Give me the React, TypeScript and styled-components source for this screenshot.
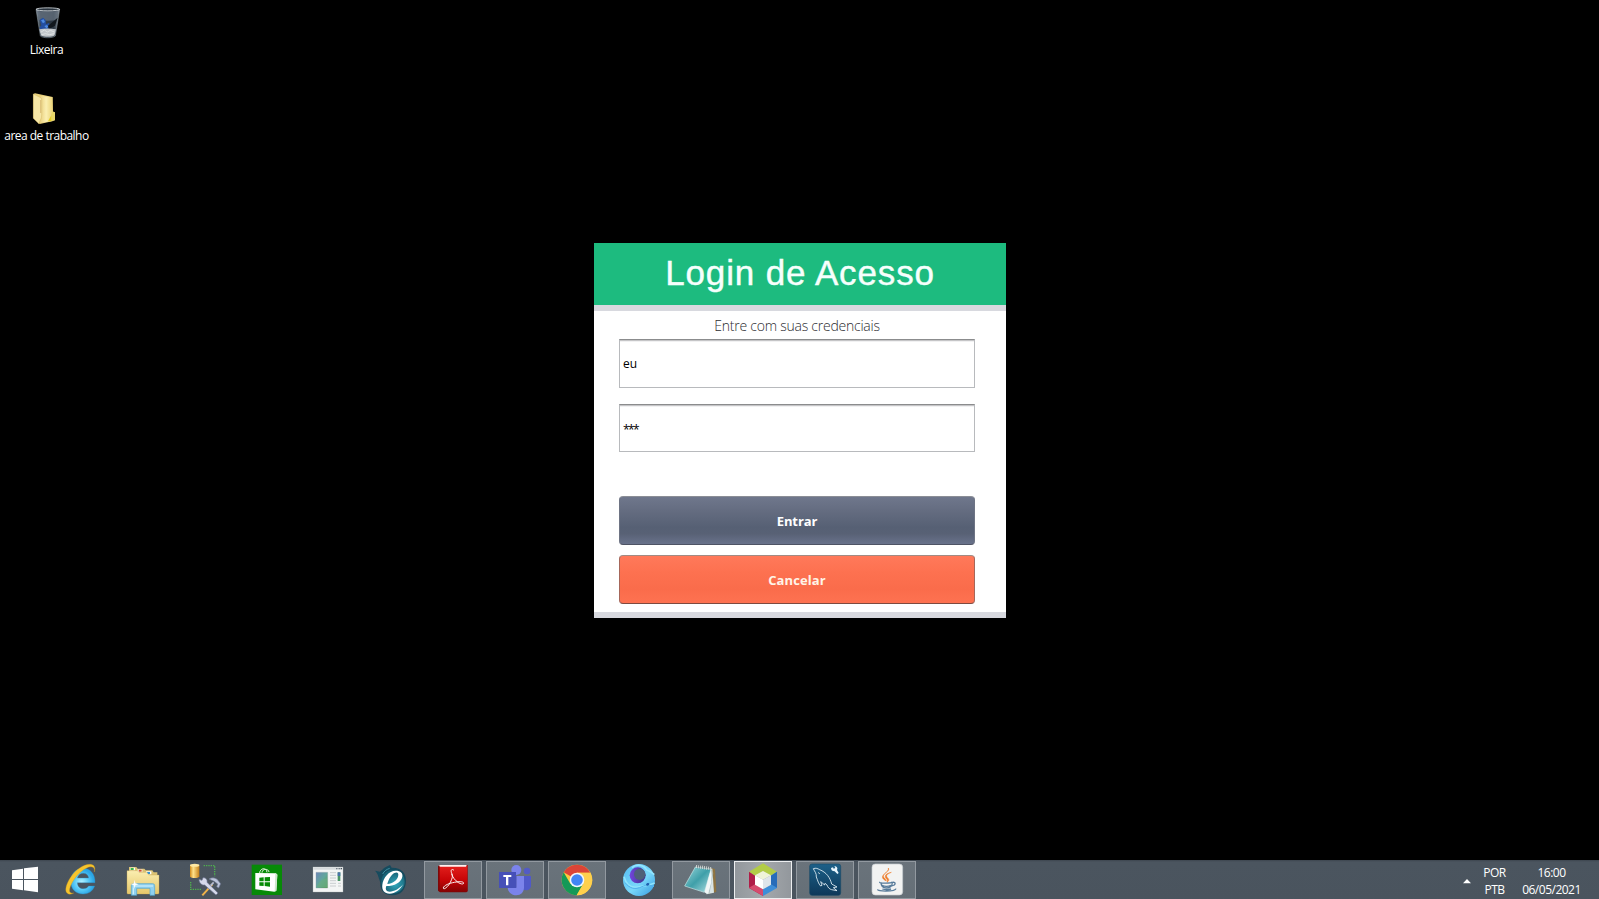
import React from "react";
import styled, { createGlobalStyle } from "styled-components";

const GlobalStyle = createGlobalStyle`
  html, body { margin: 0; background: #000; overflow: hidden; }
  * { box-sizing: border-box; }
`;

const Screen = styled.div`
  width: 1599px;
  height: 899px;
  display: flex;
  flex-direction: column;
  background: #000;
  font-family: "Open Sans", "Noto Sans", sans-serif;
`;

const Desktop = styled.main`
  flex: 1;
  display: flex;
  min-height: 0;
`;

const Shortcuts = styled.nav`
  width: 594px;
  display: flex;
  flex-direction: column;
  gap: 28px;
`;

const Shortcut = styled.div`
  width: 93px;
  height: 58px;
  display: flex;
  flex-direction: column;
  align-items: center;
`;

const ShortcutIcon = styled.svg`
  width: 93px;
  height: 42px;
  flex: none;
  display: block;
`;

const ShortcutLabel = styled.span<{ $spacing: number }>`
  color: #fff;
  font-size: 12px;
  line-height: 16px;
  white-space: nowrap;
  letter-spacing: ${(p) => p.$spacing}px;
`;

const Dialog = styled.section`
  width: 412px;
  height: 375px;
  margin-top: 243px;
  display: flex;
  flex-direction: column;
  background: #fff;
`;

const DialogHeader = styled.header`
  height: 62px;
  flex: none;
  display: flex;
  justify-content: center;
  background: #1dbb7f;
`;

const Title = styled.h1`
  margin: 0;
  font: 400 35px/59px "Liberation Sans", Arial, sans-serif;
  letter-spacing: 0.85px;
  color: #f6fffc;
  -webkit-text-stroke: 0.4px #f6fffc;
`;

const Stripe = styled.div`
  height: 6px;
  flex: none;
  background: #d8d9df;
`;

const Form = styled.div`
  flex: 1;
  min-height: 0;
  width: 381px;
  padding-left: 25px;
  display: flex;
  flex-direction: column;
`;

const Hint = styled.p`
  margin: 0;
  height: 28px;
  flex: none;
  padding-top: 5px;
  text-align: center;
  font-size: 14px;
  font-weight: 300;
  line-height: 20px;
  letter-spacing: -0.24px;
  color: #2c2c30;
`;

const Field = styled.div<{ $height: number; $gap: number }>`
  height: ${(p) => p.$height}px;
  flex: none;
  margin-bottom: ${(p) => p.$gap}px;
  padding: 0 3px 1px;
  display: flex;
  align-items: center;
  border: 1px solid #b8babd;
  border-top-color: #8b8c8d;
  box-shadow: inset 0 1px 0 #c5c5c7, inset 0 2px 0 #f1f1f2;
  font-size: 12px;
  color: #000;
`;

const Mask = styled.span`
  padding-top: 3px;
  letter-spacing: -1.6px;
`;

const Button = styled.button<{ $tone: "slate" | "coral" }>`
  width: 356px;
  height: 49px;
  flex: none;
  margin: 0 0 10px;
  padding: 1px 0 0;
  border: 1px solid;
  border-radius: 4px;
  font: 700 13px "Open Sans", "Noto Sans", sans-serif;
  letter-spacing: ${(p) => (p.$tone === "slate" ? -0.1 : 0.1)}px;
  color: ${(p) => (p.$tone === "slate" ? "#fff" : "#fff4e8")};
  border-color: ${(p) =>
    p.$tone === "slate" ? "#8b8e96 #6e7484 #4e5364" : "#a18b84 #a6675a #7e4a40"};
  background: ${(p) =>
    p.$tone === "slate"
      ? "linear-gradient(#6f778c 0%, #646c80 30%, #566074 65%, #586175 78%, #69728b 100%)"
      : "linear-gradient(#ff795a 0%, #fd7150 35%, #fa6c4b 70%, #fe7251 100%)"};

  &:last-child {
    margin-bottom: 0;
  }
`;

const Taskbar = styled.footer`
  height: 39px;
  flex: none;
  display: flex;
  background: linear-gradient(#3d464f 0, #4b555f 2px, #4a545e 100%);
`;

const StartButton = styled.div`
  width: 52px;
  height: 39px;
`;

const Apps = styled.div`
  display: flex;
  gap: 4px;
  flex: 1;
`;

type AppState = "pinned" | "open" | "active";

const AppButton = styled.div<{ $state: AppState }>`
  width: 58px;
  height: 39px;
  background: ${(p) =>
    p.$state === "pinned"
      ? "none"
      : p.$state === "open"
      ? "linear-gradient(#6a737b, #656f77)"
      : "linear-gradient(90deg, #92979c, #a4a8ac 50%, #92979c)"};
  box-shadow: ${(p) =>
    p.$state === "pinned"
      ? "none"
      : p.$state === "open"
      ? "inset 0 0 0 1px #9299a0"
      : "inset 0 0 0 1px #eceef0"};
  border-top: ${(p) => (p.$state === "pinned" ? "0" : "1px solid #3d464f")};
`;

const Glyph = styled.svg<{ $raised: boolean }>`
  display: block;
  width: 100%;
  height: 39px;
  margin-top: ${(p) => (p.$raised ? -1 : 0)}px;
`;

const Tray = styled.div`
  display: flex;
  align-items: flex-start;
  color: #fff;
  font-size: 12px;
  line-height: 17px;
  text-align: center;
  white-space: nowrap;
`;

const TrayArrow = styled.svg`
  width: 8px;
  height: 5px;
  margin: 19px 8px 0 0;
`;

const TrayText = styled.div<{ $width: number; $spacing: number }>`
  width: ${(p) => p.$width}px;
  padding-top: 4px;
  letter-spacing: ${(p) => p.$spacing}px;
`;

const InternetExplorer = () => (
  <>
    <defs>
      <radialGradient id="ieBlue" cx="45%" cy="55%">
        <stop offset="0" stopColor="#b7f3ff" />
        <stop offset="0.6" stopColor="#57c9f6" />
        <stop offset="1" stopColor="#2ba6e6" />
      </radialGradient>
    </defs>
    <path
      fillRule="evenodd"
      fill="url(#ieBlue)"
      stroke="#2b8fc4"
      strokeWidth="1"
      d="M285 98H232c1 12 8 18 18 18 8 0 13-3 16-8h18c-6 16-18 24-35 24-22 0-37-15-37-38 0-22 15-39 37-39s37 17 36 43ZM232 84h34c-1-9-7-14-16-14s-16 5-18 14Z"
    />
    <path
      fill="#f6c42d"
      stroke="#d99c14"
      strokeWidth="1"
      d="M283 66c4-14 0-22-12-23-20-1-45 17-60 40-13 20-18 40-9 47 5 4 12 3 19-1-11 2-14-3-12-12 3-15 16-36 33-51 15-13 30-19 37-14 4 3 5 8 4 14Z"
    />
  </>
);

const FileExplorer = () => (
  <>
    <defs>
      <linearGradient id="fx" x1="0" y1="0" x2="0" y2="1">
        <stop offset="0" stopColor="#fbeeb0" />
        <stop offset="1" stopColor="#e5c76b" />
      </linearGradient>
    </defs>
    <path d="M387 51h22l4 5h20l4 5h20l4 6h11v30h-85Z" fill="#dcc374" />
    <path d="M391 53h14v8h-14z" fill="#fff" /><path d="M392 54h9v6h-9z" fill="#3bb54a" />
    <path d="M413 58h14v8h-14z" fill="#fff" /><path d="M416 59h9v6h-9z" fill="#d0532c" />
    <path d="M438 64h16v9h-16z" fill="#fff" /><path d="M441 66h9v6h-9z" fill="#3292d5" />
    <path d="M381 62h31l5 5h24l5 8h31v54q0 3-3 3h-90q-3 0-3-3Z" fill="url(#fx)" stroke="#c9a851" />
    <path d="M394 136v-29q0-6 6-6h58q6 0 6 6v29h-14v-21h-40v21Z" fill="#8fd0ef" stroke="#4da5d1" strokeWidth="2" />
    <path d="M399 108h60M400 112v21" stroke="#d6f4ff" strokeWidth="3" />
    <path d="M404 89l2 11 10 3-10 3-2 11-2-11-9-3 9-3Z" fill="#fff" />
  </>
);

const BuildTools = () => (
  <>
    <defs>
      <linearGradient id="drum">
        <stop offset="0" stopColor="#d08b1c" />
        <stop offset="0.35" stopColor="#ffe28a" />
        <stop offset="1" stopColor="#c4801a" />
      </linearGradient>
    </defs>
    <path d="M570 46v34c4 5 24 5 28 0V46Z" fill="url(#drum)" />
    <ellipse cx="584" cy="46" rx="14" ry="4.500" fill="#ffe9a3" />
    <path d="M611 47h33v32M572 96v22h34" fill="none" stroke="#4fb04e" strokeWidth="4" strokeDasharray="4 3" />
    <path d="M607 136l30-33" stroke="#f0b34a" strokeWidth="6" />
    <path d="M624 115l17-18" stroke="#b9bfd3" strokeWidth="5" />
    <path d="M627 87c10-6 21-4 28 5l7 9-6 13-6-4 3-8-11-8Z" fill="#bcc4da" stroke="#69728f" strokeWidth="2" />
    <path d="M597 88l9 3 3-8c9 0 14 6 12 14l33 32-6 6-34-30c-8 2-17-6-17-17Z" fill="#d5d9ea" stroke="#69718f" strokeWidth="2" />
  </>
);

const Store = () => (
  <>
    <path d="M65 44h91v91H65z" fill="#078a07" />
    <path d="M89 69c0-14 20-19 22-2M96 68c1-14 20-12 21-2" fill="none" stroke="#e6f4df" strokeWidth="3" />
    <path d="M76 69l62 1 4 4-3 48-6 3-57-7Z" fill="#fff" />
    <path d="M136 70l6 4-3 48-5 3Z" fill="#cfe5cd" />
    <path d="M88 83l13-1v12H88ZM104 82l16-1v13h-16ZM88 97h13v11l-13-1ZM104 97h16v13l-16-2Z" fill="#078a07" />
  </>
);

const WindowApp = () => (
  <>
    <defs>
      <linearGradient id="picture" x1="0" y1="0" x2="1" y2="1">
        <stop offset="0" stopColor="#6d86b8" />
        <stop offset="0.5" stopColor="#62a79c" />
        <stop offset="1" stopColor="#559b4b" />
      </linearGradient>
    </defs>
    <path d="M249 51h90v75h-90z" fill="#f4f5f5" stroke="#a9afb4" />
    <path d="M250 52h88v7h-88z" fill="#d5dadd" />
    <path d="M319 54h3v4h-3zM326 54h3v4h-3zM332 54h4v4h-4z" fill="#46535e" />
    <path d="M258 67h35v47h-35z" fill="url(#picture)" stroke="#8c9a9f" />
    <path d="M260 111q10-24 31-26v27Z" fill="#6bad83" opacity=".7" />
    <path d="M300 68h18M300 76h18M300 84h18M300 92h18M300 100h18M300 108h18M324 100h9M324 108h9" stroke="#b5babd" strokeWidth="2" />
    <path d="M323 67h8v26h-8z" fill="#4b9667" /><path d="M323 67h8v11h-8z" fill="#4a73a9" />
  </>
);

const TealBrowser = () => (
  <>
    <defs>
      <radialGradient id="teal" cx="60%" cy="60%">
        <stop offset="0" stopColor="#32a9bd" />
        <stop offset="1" stopColor="#186478" />
      </radialGradient>
    </defs>
    <path d="M435 62l15 3 7-6c7-8 14-9 23-14l5 8c29-1 44 17 43 40-1 27-16 43-41 43-23 0-36-14-36-34 0-9-4-15-6-22-2-7-4-12-10-18Z" fill="#164b5e" />
    <circle cx="489" cy="95" r="35" fill="url(#teal)" />
    <path d="M458 72c5-9 10-13 21-17" fill="none" stroke="#3c94a6" strokeWidth="3" />
    <path
      fillRule="evenodd"
      fill="#fff"
      d="M469 108c-4 10 0 17 10 17 13 0 29-8 40-22-8 17-24 28-40 28-16 0-24-11-22-26 2-22 20-43 40-43 15 0 22 7 20 18-3 17-24 28-48 28ZM472 102c16-2 29-11 32-22 3-9-1-13-7-12-10 1-21 17-25 34Z"
    />
  </>
);

const PdfReader = () => (
  <>
    <defs>
      <linearGradient id="pdf" x1="0" y1="0" x2="0" y2="1">
        <stop offset="0" stopColor="#e3201d" />
        <stop offset="0.55" stopColor="#c80508" />
        <stop offset="1" stopColor="#860203" />
      </linearGradient>
    </defs>
    <path d="M54 49l5-4h84v78l-4 4H60l-6-5Z" fill="#7e0808" />
    <path d="M59 46h83v79H59z" fill="url(#pdf)" />
    <path d="M56 47l5-2h79l-2 5H61Z" fill="#fff0ef" />
    <path
      d="M102 61c-6-5-10-2-8 6 4 8 4 13 1 21-5 13-10 20-18 26-5 4-9 2-6-3 6-8 23-13 38-15 12-2 21-1 22 3 0 5-10 3-17-2-9-6-16-15-19-25"
      fill="none"
      stroke="#fff"
      strokeWidth="2.800"
    />
  </>
);

const Teams = () => (
  <>
    <circle cx="321" cy="63" r="10" fill="#535bc4" />
    <path d="M304 78h29v28c0 10-7 15-14 15-9 0-15-5-15-13Z" fill="#5059c9" />
    <circle cx="289" cy="60" r="15" fill="#7b83eb" />
    <path d="M263 78h49v34c0 15-10 24-23 24s-24-8-26-22Z" fill="#7b83eb" />
    <path d="M274 78h16v35h-26l-2-8Z" fill="#5961bd" />
    <path d="M237 66h51v48h-51z" fill="#4650b8" />
    <path d="M250 75h24v6h-9v25h-7V81h-8Z" fill="#fff" />
  </>
);

const Chrome = () => (
  <>
    <circle cx="471" cy="90" r="46" fill="#fbc93f" />
    <path d="M471 90L431 67A46 46 0 0 1 511 68H471Z" fill="#db4437" />
    <path d="M431 67A46 46 0 0 0 470 136L490 101 451 101Z" fill="#159957" />
    <path d="M471 68h40a46 46 0 0 1-41 68l20-35Z" fill="#ffd04d" />
    <circle cx="471" cy="90" r="22" fill="#f4f7fb" />
    <circle cx="471" cy="90" r="17.500" fill="#4285f4" />
  </>
);

const Swirl = () => (
  <>
    <defs>
      <linearGradient id="sea" x1="0" y1="0" x2="1" y2="1">
        <stop offset="0" stopColor="#54baf0" />
        <stop offset="0.55" stopColor="#79d8fa" />
        <stop offset="1" stopColor="#3398de" />
      </linearGradient>
      <linearGradient id="violet">
        <stop offset="0" stopColor="#7345dc" />
        <stop offset="1" stopColor="#3d358a" />
      </linearGradient>
    </defs>
    <circle cx="657" cy="90" r="48" fill="url(#sea)" />
    <circle cx="653" cy="76" r="24" fill="url(#violet)" />
    <circle cx="659" cy="73" r="17" fill="#4f6078" />
    <path d="M612 80c7 24 20 35 40 31 15-3 31-3 52-12" fill="none" stroke="#8fe4fb" strokeWidth="5" />
    <path d="M615 98c15 18 30 22 51 12 15-7 23-5 36 0" fill="none" stroke="#4fb0ec" strokeWidth="3" />
    <path d="M636 53c14-13 37-8 44 7 10 3 16 7 23 14" fill="none" stroke="#93e5fe" strokeWidth="5" />
    <path d="M678 104c1-6 9-7 10-2-1 6-8 7-10 2Z" fill="#2060ae" />
  </>
);

const Notepad = () => (
  <>
    <defs>
      <linearGradient id="pad" x1="0" y1="0" x2="1" y2="1">
        <stop offset="0" stopColor="#9bd8dc" />
        <stop offset="0.5" stopColor="#3f9fa9" />
        <stop offset="1" stopColor="#b0dfe3" />
      </linearGradient>
    </defs>
    <path d="M302 54l13 3 4 69-27 6Z" fill="#8f7441" />
    <path d="M257 50l50 6 5 72-22 5-16-20Z" fill="#d9e4e5" />
    <path d="M305 58l-14 73M309 68l-12 62" stroke="#8ea8aa" strokeWidth="1.500" />
    <path d="M256 51l47 7-20 69-59-19Z" fill="url(#pad)" stroke="#c5e7e8" strokeWidth="2" />
    <path d="M303 58l-19 69 10 4 10-35Z" fill="#f2f7f7" />
    <path d="M260 45v9M266 46v9M272 47v9M278 47v10M284 48v10M290 49v10M296 50v9M302 51v9" stroke="#d9dddd" strokeWidth="3" />
    <path d="M263 46v9M269 46v9M275 47v9M281 48v9M287 48v10M293 49v10M299 50v9" stroke="#59666a" strokeWidth="1.500" />
  </>
);

const NetBeans = () => (
  <>
    <path d="M114 40l42 25-19 12-23-13-24 13-18-12Z" fill="#b2cc47" />
    <path d="M72 65l18 12v27l24 13v21l-42-24Z" fill="#af1d48" />
    <path d="M72 113l18-10 24 14v21Z" fill="#d64b6e" />
    <path d="M156 65l-18 12v27l-24 13v21l42-24Z" fill="#3d8ed8" />
    <path d="M138 77l18-12v48l-18-10Z" fill="#276cb9" />
    <path d="M114 63l24 13-24 13-24-13Z" fill="#eff3d8" />
    <path d="M90 76l24 13v29l-24-14Z" fill="#fff" />
    <path d="M138 76l-24 13v29l24-14Z" fill="#dfe5ea" />
  </>
);

const MySqlWorkbench = () => (
  <>
    <defs>
      <linearGradient id="sql" x1="0" y1="0" x2="0" y2="1">
        <stop offset="0" stopColor="#1d6088" />
        <stop offset="1" stopColor="#0d3859" />
      </linearGradient>
    </defs>
    <rect x="254" y="42" width="93" height="94" rx="7" fill="url(#sql)" stroke="#194a66" strokeWidth="2" />
    <path d="M265 56c8-3 13 0 19 3 20 8 31 23 36 43l16 9-11 2 11 9-16-3c-7-2-11-6-14-14l-6-5-2 5c-5-4-7-9-11-10l4 11-4 2c-7-7-8-15-13-27 1-11-5-16-9-25Z" fill="none" stroke="#e8f4fa" strokeWidth="2.500" />
    <path d="M280 68l4 3" stroke="#fff" strokeWidth="3" />
    <path d="M318 54l6-2 2 4 5-2-3-5c8 0 11 6 8 11l5 9-4 3-8-8c-7 0-11-4-11-10Z" fill="#e8f6fe" />
  </>
);

const Java = () => (
  <>
    <rect x="441" y="42" width="92" height="93" rx="10" fill="#f2f3f2" stroke="#c4cacf" strokeWidth="2" />
    <path
      d="M490 54c7 8-16 16-15 25 1 6 8 8 9 14-14-7-15-14-5-22 8-6 12-9 11-17ZM499 67c-17 7-17 11-9 19 3 4 1 7-4 11 3-6 1-8-3-12-6-9 2-15 16-18Z"
      fill="#ee7a26"
      stroke="#ee7a26"
      strokeWidth="1.500"
    />
    <path d="M465 96c-7 4 33 5 37 0M468 97c0 13 5 17 16 17 12 0 17-5 18-15M500 98c12-5 16 7-2 10M471 106c7 3 20 3 27 0M459 118c-5 7 51 8 54-2M472 117c8 3 20 2 26 0" fill="none" stroke="#587c9b" strokeWidth="4" />
  </>
);

const apps: { name: string; state: AppState; offset: number; Icon: React.FC }[] = [
  { name: "ie", state: "pinned", offset: 156, Icon: InternetExplorer },
  { name: "explorer", state: "pinned", offset: 342, Icon: FileExplorer },
  { name: "tools", state: "pinned", offset: 528, Icon: BuildTools },
  { name: "store", state: "pinned", offset: 24, Icon: Store },
  { name: "window", state: "pinned", offset: 210, Icon: WindowApp },
  { name: "browser", state: "pinned", offset: 396, Icon: TealBrowser },
  { name: "pdf", state: "open", offset: 12, Icon: PdfReader },
  { name: "teams", state: "open", offset: 198, Icon: Teams },
  { name: "chrome", state: "open", offset: 384, Icon: Chrome },
  { name: "swirl", state: "pinned", offset: 570, Icon: Swirl },
  { name: "notepad", state: "open", offset: 186, Icon: Notepad },
  { name: "netbeans", state: "active", offset: 27, Icon: NetBeans },
  { name: "mysql", state: "open", offset: 213, Icon: MySqlWorkbench },
  { name: "java", state: "open", offset: 399, Icon: Java },
];

const RecycleBin = () => (
  <ShortcutIcon viewBox="0 0 279 126">
    <defs>
      <linearGradient id="bin">
        <stop offset="0" stopColor="#8b97a3" />
        <stop offset="0.2" stopColor="#35424f" />
        <stop offset="0.75" stopColor="#2a3540" />
        <stop offset="1" stopColor="#8a939c" />
      </linearGradient>
    </defs>
    <path d="M108 28h71l-13 80c-8 7-38 7-45 0Z" fill="url(#bin)" stroke="#8f9aa4" strokeWidth="1.500" />
    <path d="M113 34h61l-3 26q-26 5-55 0Z" fill="#65727f" opacity=".75" />
    <path d="M119 59l10-6 8 7 1 12 9-3 5 11-10 13-9-5-8 4-7-9 6-7Z" fill="#244ea0" />
    <path d="M123 61l8-3 4 8-6 4ZM133 78l8-3 4 5-6 5Z" fill="#4d8ae0" />
    <path d="M144 77l29-24-8 24-19 11Z" fill="#11171d" />
    <path d="M118 88q25-5 50 0l-4 18c-7 6-33 6-41 0Z" fill="#c3c7cb" />
    <path d="M122 97l11-7 9 6 9-5 12 5M124 105l12-4 13 3 13-3" fill="none" stroke="#eceeef" strokeWidth="2" />
    <ellipse cx="143.500" cy="28" rx="35.500" ry="4.500" fill="#27313b" stroke="#d5dbe0" strokeWidth="2.500" />
  </ShortcutIcon>
);

const Folder = () => (
  <ShortcutIcon viewBox="0 258 279 126">
    <defs>
      <linearGradient id="folder">
        <stop offset="0" stopColor="#e9cf7d" />
        <stop offset="0.5" stopColor="#fbefb2" />
        <stop offset="1" stopColor="#ecd57b" />
      </linearGradient>
    </defs>
    <path d="M100 282l5-2 53 11 1 44 6 2v24l-8 3-38 8-19-17Z" fill="#e8d07b" />
    <path d="M120 287l37 5v71l-37 6Z" fill="url(#folder)" />
    <path d="M157 334l7 3v23l-10 3v-20Z" fill="#e8d768" />
    <path d="M144 364l10-18v17Z" fill="#e3cd20" />
    <path d="M100 282l22 11c3 2 3 5 3 9v43c0 12-6 16-8 27l-17-17Z" fill="#f6e6a5" stroke="#c8ab55" strokeWidth="1" />
    <path d="M122 300v39" stroke="#cda95e" strokeWidth="2" />
  </ShortcutIcon>
);

export default function App() {
  return (
    <Screen>
      <GlobalStyle />
      <Desktop>
        <Shortcuts>
          <Shortcut>
            <RecycleBin />
            <ShortcutLabel $spacing={-0.5}>Lixeira</ShortcutLabel>
          </Shortcut>
          <Shortcut>
            <Folder />
            <ShortcutLabel $spacing={-0.53}>area de trabalho</ShortcutLabel>
          </Shortcut>
        </Shortcuts>
        <Dialog>
          <DialogHeader>
            <Title>Login de Acesso</Title>
          </DialogHeader>
          <Stripe />
          <Form>
            <Hint>Entre com suas credenciais</Hint>
            <Field $height={49} $gap={16}>eu</Field>
            <Field $height={48} $gap={44}>
              <Mask>***</Mask>
            </Field>
            <Button $tone="slate">Entrar</Button>
            <Button $tone="coral">Cancelar</Button>
          </Form>
          <Stripe />
        </Dialog>
      </Desktop>
      <Taskbar>
        <StartButton>
          <Glyph $raised={false} viewBox="0 30 156 117">
            <path d="M36 61l33-5v31H36ZM72 55l42-5v37H72ZM36 90h33v31l-33-5ZM72 90h42v37l-42-6Z" fill="#fff" />
          </Glyph>
        </StartButton>
        <Apps>
          {apps.map(({ name, state, offset, Icon }) => (
            <AppButton key={name} $state={state}>
              <Glyph $raised={state !== "pinned"} viewBox={`${offset} 30 174 117`}>
                <Icon />
              </Glyph>
            </AppButton>
          ))}
        </Apps>
        <Tray>
          <TrayArrow viewBox="0 0 8 5">
            <path d="M4 0l4 4.200H0Z" fill="#fff" />
          </TrayArrow>
          <TrayText $width={31} $spacing={-0.45}>
            POR
            <br />
            PTB
          </TrayText>
          <TrayText $width={83} $spacing={-0.5}>
            16:00
            <br />
            06/05/2021
          </TrayText>
          <TrayText $width={6} $spacing={0} />
        </Tray>
      </Taskbar>
    </Screen>
  );
}
